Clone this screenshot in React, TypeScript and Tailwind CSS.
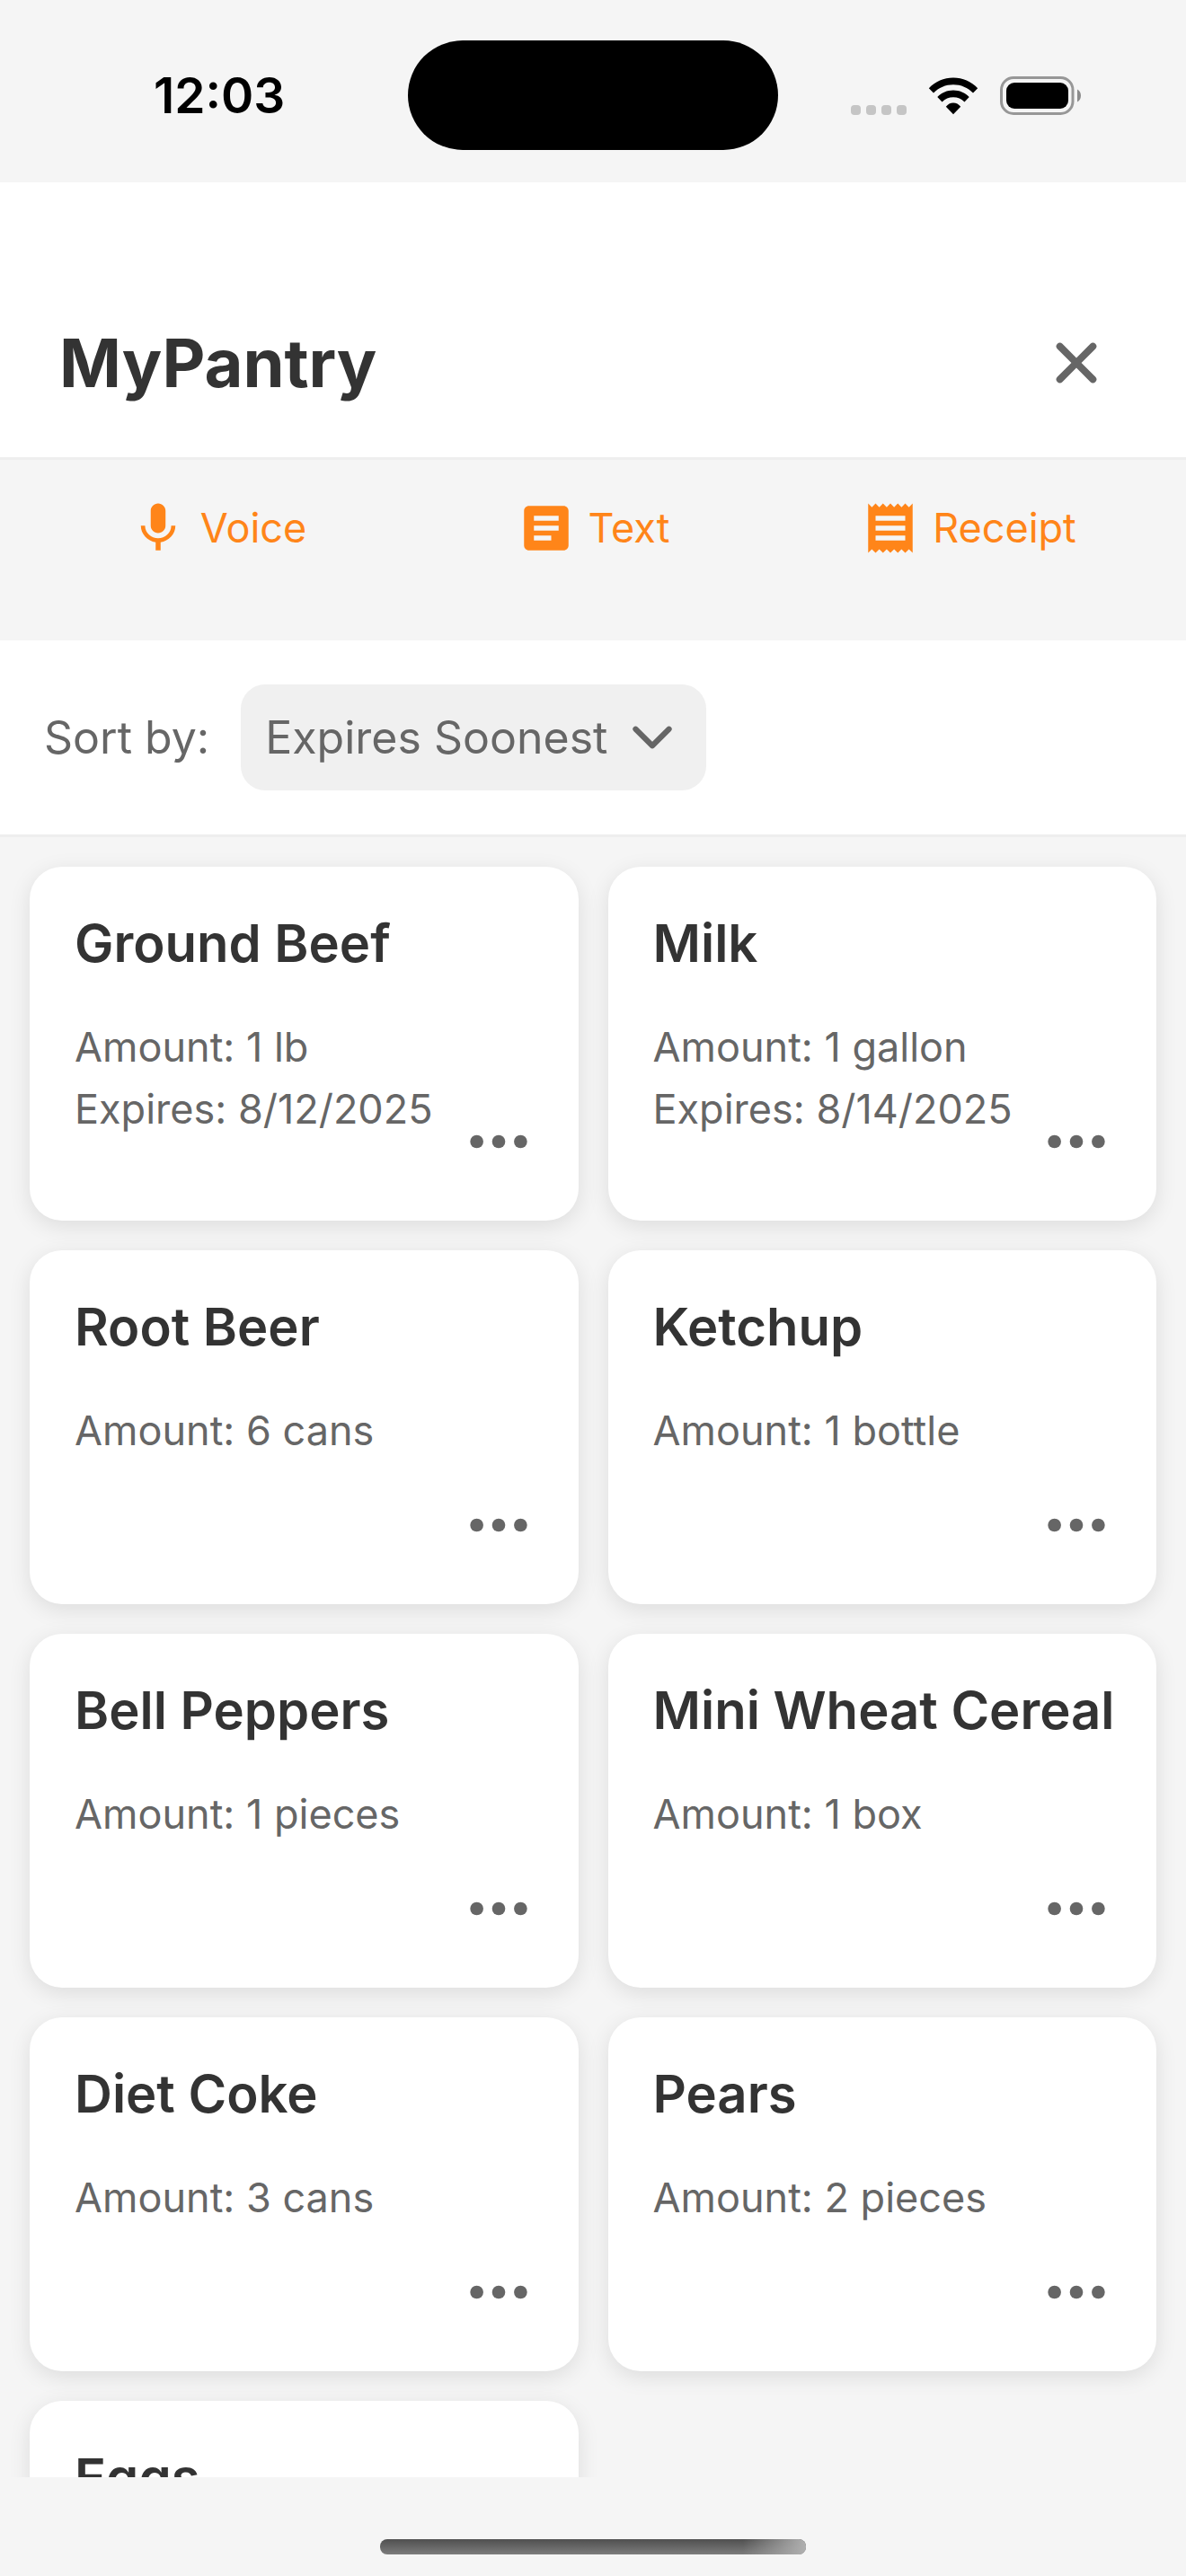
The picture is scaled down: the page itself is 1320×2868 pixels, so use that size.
import type { ComponentType } from "react";
import { IoChevronDown, IoClose, IoEllipsisHorizontal } from "react-icons/io5";
import { MdArticle, MdMic, MdReceipt } from "react-icons/md";

type Item = { name: string; amount?: string; expires?: string };

const items: Item[] = [
  { name: "Ground Beef", amount: "1 lb", expires: "8/12/2025" },
  { name: "Milk", amount: "1 gallon", expires: "8/14/2025" },
  { name: "Root Beer", amount: "6 cans" },
  { name: "Ketchup", amount: "1 bottle" },
  { name: "Bell Peppers", amount: "1 pieces" },
  { name: "Mini Wheat Cereal", amount: "1 box" },
  { name: "Diet Coke", amount: "3 cans" },
  { name: "Pears", amount: "2 pieces" },
  { name: "Eggs" },
];

const actions: { label: string; icon: ComponentType<{ className?: string }> }[] = [
  { label: "Voice", icon: MdMic },
  { label: "Text", icon: MdArticle },
  { label: "Receipt", icon: MdReceipt },
];

function WifiIcon() {
  return (
    <svg viewBox="0 0 56 42" className="h-[42px] w-[56px]" aria-label="Wi-Fi">
      <path d="M28 0.5C38.5 0.5 48 4.700 55.200 12.200L50 17.600C44.200 11.600 36.500 8.300 28 8.300S11.800 11.600 6 17.600L0.800 12.200C8 4.700 17.500 0.500 28 0.500Z" />
      <path d="M28 14.500C34.800 14.500 41 17.200 45.700 22L40.500 27.500C37.200 24.100 32.800 22.300 28 22.300S18.800 24.100 15.500 27.500L10.300 22C15 17.200 21.200 14.500 28 14.500Z" />
      <path d="M28 28.500C31.200 28.500 34 30 36.200 32.700L28 41.300L19.800 32.700C22 30 24.800 28.500 28 28.500Z" />
    </svg>
  );
}

function BatteryIcon() {
  return (
    <svg viewBox="0 0 90 43" className="h-[43px] w-[90px]" aria-label="Battery">
      <rect x="1.500" y="1.500" width="79.500" height="40" rx="13.500" fill="none" stroke="#979797" strokeWidth="3" />
      <rect x="7" y="7" width="69" height="29" rx="9" />
      <path d="M86 14.500C88.600 15.800 90 18.300 90 21.500S88.600 27.200 86 28.500Z" fill="#8c8c8c" />
    </svg>
  );
}

function StatusBar() {
  return (
    <div className="grid grid-cols-[1fr_412px_1fr] items-center pt-[45px] pb-9">
      <time className="pl-[171px] text-[55px] leading-[66px] font-semibold text-black">12:03</time>
      <div className="h-[122px] rounded-[61px] bg-black" />
      <div className="flex items-end gap-6 pl-[81px]">
        <div className="flex gap-[6px]">
          <span className="size-[11px] rounded-sm bg-[#c5c5c5]" />
          <span className="size-[11px] rounded-sm bg-[#c5c5c5]" />
          <span className="size-[11px] rounded-sm bg-[#c5c5c5]" />
          <span className="size-[11px] rounded-sm bg-[#c5c5c5]" />
        </div>
        <WifiIcon />
        <BatteryIcon />
      </div>
    </div>
  );
}

function PantryCard({ item }: { item: Item }) {
  return (
    <li className="relative min-h-[394px] min-w-0 rounded-[36px] bg-white p-[50px] shadow-[0_6px_24px_rgba(0,0,0,0.1)]">
      <h2 className="text-[58px] leading-[70px] font-semibold whitespace-nowrap text-[#333333]">{item.name}</h2>
      <div className="mt-[46px] text-[45px] leading-[69px] text-[#666666]">
        {item.amount && <p>Amount: {item.amount}</p>}
        {item.expires && <p>Expires: {item.expires}</p>}
      </div>
      <button type="button" aria-label={`Options for ${item.name}`} className="absolute right-[50px] bottom-[49px] text-[#666666]">
        <IoEllipsisHorizontal className="size-[78px]" />
      </button>
    </li>
  );
}

export default function App() {
  return (
    <div className="flex h-screen flex-col bg-[#f5f5f5] font-['Inter',sans-serif]">
      <StatusBar />

      <header className="flex items-center justify-between border-b-3 border-[#eeeeee] bg-white px-[66px] pt-[145px] pb-[49px]">
        <h1 className="text-[74px] leading-[90px] font-bold text-[#333333]">MyPantry</h1>
        <button type="button" aria-label="Close" className="p-[14px] text-[#666666]">
          <IoClose className="size-[84px]" />
        </button>
      </header>

      <nav className="grid grid-cols-3 px-[33px] pt-[43px] pb-[92px]">
        {actions.map(({ label, icon: Icon }) => (
          <button key={label} type="button" className="flex items-center justify-center gap-[14px] text-[45px] leading-[66px] text-[#ff8519]">
            <Icon className="size-[66px]" />
            {label}
          </button>
        ))}
      </nav>

      <div className="flex items-center gap-[35px] border-b-3 border-[#eeeeee] bg-white px-[49px] py-[49px] text-[50px] leading-[60px] text-[#666666]">
        <label htmlFor="sort">Sort by:</label>
        <div className="relative">
          <select id="sort" className="h-[118px] appearance-none rounded-[27px] bg-[#f0f0f0] pr-[109px] pl-[27px]">
            <option>Expires Soonest</option>
            <option>Expires Latest</option>
            <option>Name</option>
          </select>
          <IoChevronDown className="pointer-events-none absolute top-[26px] right-[27px] size-[66px]" />
        </div>
      </div>

      <main className="min-h-0 flex-1 overflow-hidden">
        <ul className="grid grid-cols-2 gap-[33px] p-[33px]">
          {items.map((item) => (
            <PantryCard key={item.name} item={item} />
          ))}
        </ul>
      </main>

      <footer className="flex justify-center pt-[69px] pb-6">
        <div className="flex h-[17px] w-[474px] justify-end overflow-hidden rounded-[8px] bg-linear-to-b from-[#505050] to-[#7c7c7c]">
          <div className="w-[70px] bg-linear-to-r from-transparent to-[#b0b0b0]" />
        </div>
      </footer>
    </div>
  );
}
